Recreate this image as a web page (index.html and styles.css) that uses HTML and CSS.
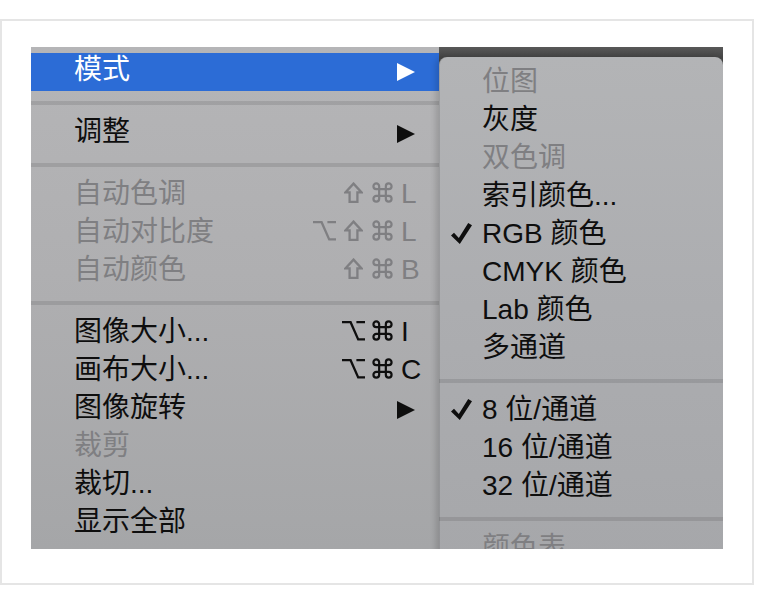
FILE: index.html
```html
<!DOCTYPE html>
<html lang="zh-CN">
<head>
<meta charset="utf-8">
<title>图像菜单</title>
<link rel="stylesheet" href="styles.css">
</head>
<body>
<div class="frame">
  <div class="shot">
    <div class="menu main">
      <div class="strip"></div>
      <div class="item active"><span class="label">模式</span><svg class="arrow" viewBox="0 0 18 18"><polygon points="0,0 18,9 0,18"/></svg></div>
      <div class="sep"></div>
      <div class="item"><span class="label">调整</span><svg class="arrow" viewBox="0 0 18 18"><polygon points="0,0 18,9 0,18"/></svg></div>
      <div class="sep"></div>
      <div class="item disabled"><span class="label">自动色调</span><span class="keys"><span class="mod"><svg class="i-shift" viewBox="0 0 19 21"><path d="M9.5,1.6 L17.6,10.4 H13.4 V19.8 H5.6 V10.4 H1.4 Z"/></svg></span><span class="mod"><svg class="i-cmd" viewBox="0 0 22 22"><path d="M7.5,7.5 V4.5 A3,3 0 1 0 4.5,7.5 H17.5 A3,3 0 1 0 14.5,4.5 V17.5 A3,3 0 1 0 17.5,14.5 H4.5 A3,3 0 1 0 7.5,17.5 Z"/></svg></span><span class="key">L</span></span></div>
      <div class="item disabled"><span class="label">自动对比度</span><span class="keys"><span class="mod"><svg class="i-opt" viewBox="0 0 23 21"><path d="M0,2.2 H8.6 L16.2,19.4 H23 M14.4,2.2 H23"/></svg></span><span class="mod"><svg class="i-shift" viewBox="0 0 19 21"><path d="M9.5,1.6 L17.6,10.4 H13.4 V19.8 H5.6 V10.4 H1.4 Z"/></svg></span><span class="mod"><svg class="i-cmd" viewBox="0 0 22 22"><path d="M7.5,7.5 V4.5 A3,3 0 1 0 4.5,7.5 H17.5 A3,3 0 1 0 14.5,4.5 V17.5 A3,3 0 1 0 17.5,14.5 H4.5 A3,3 0 1 0 7.5,17.5 Z"/></svg></span><span class="key">L</span></span></div>
      <div class="item disabled"><span class="label">自动颜色</span><span class="keys"><span class="mod"><svg class="i-shift" viewBox="0 0 19 21"><path d="M9.5,1.6 L17.6,10.4 H13.4 V19.8 H5.6 V10.4 H1.4 Z"/></svg></span><span class="mod"><svg class="i-cmd" viewBox="0 0 22 22"><path d="M7.5,7.5 V4.5 A3,3 0 1 0 4.5,7.5 H17.5 A3,3 0 1 0 14.5,4.5 V17.5 A3,3 0 1 0 17.5,14.5 H4.5 A3,3 0 1 0 7.5,17.5 Z"/></svg></span><span class="key">B</span></span></div>
      <div class="sep"></div>
      <div class="item"><span class="label">图像大小...</span><span class="keys"><span class="mod"><svg class="i-opt" viewBox="0 0 23 21"><path d="M0,2.2 H8.6 L16.2,19.4 H23 M14.4,2.2 H23"/></svg></span><span class="mod"><svg class="i-cmd" viewBox="0 0 22 22"><path d="M7.5,7.5 V4.5 A3,3 0 1 0 4.5,7.5 H17.5 A3,3 0 1 0 14.5,4.5 V17.5 A3,3 0 1 0 17.5,14.5 H4.5 A3,3 0 1 0 7.5,17.5 Z"/></svg></span><span class="key">I</span></span></div>
      <div class="item"><span class="label">画布大小...</span><span class="keys"><span class="mod"><svg class="i-opt" viewBox="0 0 23 21"><path d="M0,2.2 H8.6 L16.2,19.4 H23 M14.4,2.2 H23"/></svg></span><span class="mod"><svg class="i-cmd" viewBox="0 0 22 22"><path d="M7.5,7.5 V4.5 A3,3 0 1 0 4.5,7.5 H17.5 A3,3 0 1 0 14.5,4.5 V17.5 A3,3 0 1 0 17.5,14.5 H4.5 A3,3 0 1 0 7.5,17.5 Z"/></svg></span><span class="key">C</span></span></div>
      <div class="item"><span class="label">图像旋转</span><svg class="arrow" viewBox="0 0 18 18"><polygon points="0,0 18,9 0,18"/></svg></div>
      <div class="item disabled"><span class="label">裁剪</span></div>
      <div class="item"><span class="label">裁切...</span></div>
      <div class="item"><span class="label">显示全部</span></div>
    </div>
    <div class="side">
      <div class="menu sub">
        <div class="item disabled"><span class="slot"></span><span class="label">位图</span></div>
        <div class="item"><span class="slot"></span><span class="label">灰度</span></div>
        <div class="item disabled"><span class="slot"></span><span class="label">双色调</span></div>
        <div class="item"><span class="slot"></span><span class="label">索引颜色...</span></div>
        <div class="item"><span class="slot"><svg class="check" viewBox="0 0 21 21"><path d="M0,12.4 L3,9.8 L7.8,15 L17.2,0 L21,2.2 L8.8,21 Z"/></svg></span><span class="label">RGB 颜色</span></div>
        <div class="item"><span class="slot"></span><span class="label">CMYK 颜色</span></div>
        <div class="item"><span class="slot"></span><span class="label">Lab 颜色</span></div>
        <div class="item"><span class="slot"></span><span class="label">多通道</span></div>
        <div class="sep"></div>
        <div class="item"><span class="slot"><svg class="check" viewBox="0 0 21 21"><path d="M0,12.4 L3,9.8 L7.8,15 L17.2,0 L21,2.2 L8.8,21 Z"/></svg></span><span class="label">8 位/通道</span></div>
        <div class="item"><span class="slot"></span><span class="label">16 位/通道</span></div>
        <div class="item"><span class="slot"></span><span class="label">32 位/通道</span></div>
        <div class="sep"></div>
        <div class="item disabled"><span class="slot"></span><span class="label">颜色表</span></div>
      </div>
    </div>
  </div>
</div>
</body>
</html>
```

FILE: styles.css
```css
html, body {
  margin: 0;
  padding: 0;
  background: #ffffff;
}

.frame {
  margin-top: 19px;
  width: 754px;
  height: 566px;
  box-sizing: border-box;
  border: 2px solid #e5e5e5;
  padding: 26px 0 0 29px;
}

.shot {
  width: 692px;
  height: 502px;
  display: flex;
  overflow: hidden;
}

.menu {
  font-family: "Liberation Sans", "Noto Sans CJK SC", sans-serif;
  font-size: 28px;
  color: #0e0e0e;
}

.main {
  width: 408px;
  flex: none;
  background: linear-gradient(180deg, #b5b5b7 0%, #afafb1 45%, #a5a6a8 100%);
}

.strip {
  height: 6px;
}

.item {
  display: flex;
  align-items: center;
  height: 38px;
  box-sizing: border-box;
  white-space: nowrap;
}

.main .item {
  padding: 0 20px 0 43px;
}

.label {
  flex: 1;
  line-height: 34px;
  padding-bottom: 4px;
}

.item.active {
  background: #2c6cd6;
  color: #ffffff;
}

.item.disabled {
  color: #7f7f82;
}

.arrow {
  width: 18px;
  height: 18px;
  margin-right: 4px;
  fill: currentColor;
}

.keys {
  display: flex;
  line-height: 34px;
  padding-bottom: 4px;
}

.mod {
  display: inline-block;
  width: 29px;
  text-align: center;
}

.mod svg {
  fill: none;
  stroke: currentColor;
  stroke-width: 2.3;
  vertical-align: baseline;
}

.i-cmd {
  width: 21px;
  height: 21px;
}

.i-shift {
  width: 19px;
  height: 21px;
  stroke-linejoin: miter;
}

.i-opt {
  width: 23px;
  height: 21px;
}

.key {
  display: inline-block;
  width: 18px;
  margin-left: 4px;
}

.sep {
  height: 4px;
  margin: 10px 0;
  background: rgba(0, 0, 0, 0.1);
}

.side {
  width: 284px;
  flex: none;
  padding-top: 10px;
  background: linear-gradient(180deg, #585858 0px, #464646 10px, #464646 100%);
}

.sub {
  height: 100%;
  padding-top: 8px;
  border-radius: 8px 8px 0 0;
  background: linear-gradient(180deg, #b3b4b6 0%, #acadb0 50%, #a6a7aa 100%);
  box-shadow: -3px 0 6px rgba(0, 0, 0, 0.16), inset 1px 0 0 rgba(0, 0, 0, 0.12);
}

.sub .item {
  padding: 0 12px;
}

.slot {
  width: 31px;
  flex: none;
  display: flex;
  align-items: center;
  margin-bottom: 5px;
}

.check {
  width: 21px;
  height: 21px;
  fill: #0e0e0e;
}
```
